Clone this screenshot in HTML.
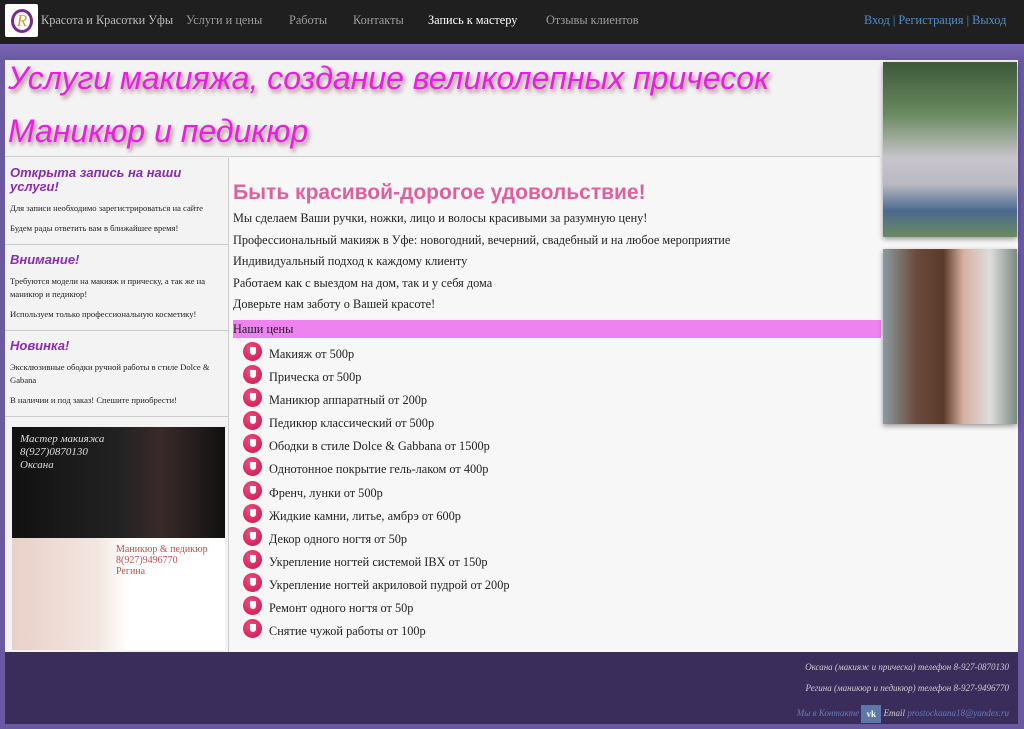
<!DOCTYPE html>
<html><head><meta charset="utf-8"><style>
*{margin:0;padding:0;box-sizing:border-box}
body{width:1024px;height:729px;overflow:hidden;background:#6a58a0;font-family:"Liberation Serif",serif;position:relative}
.nav{position:absolute;left:0;top:0;width:1024px;height:44px;background:#1f1f1f}
.logo{position:absolute;left:5px;top:4px;width:33px;height:33px;background:#fff;border-radius:2px}
.logo span{position:absolute;left:6px;top:5px;width:22px;height:24px;border:3px solid #7b2b8c;border-radius:50%;color:#c9a23a;font-size:17px;font-style:italic;line-height:18px;text-align:center}
.nav a{position:absolute;top:13px;font-size:12.3px;color:#9d9d9d;text-decoration:none;white-space:nowrap}
.bgstrip{position:absolute;left:0;top:44px;width:1024px;height:16px;background:linear-gradient(#7a68b5,#6a58a0)}
.main{position:absolute;left:5px;top:60px;width:1013px;height:592px;background:#f7f7f7}
.head{position:absolute;left:0;top:0;width:875px;height:97px;background:#f3f3f3;border-bottom:1px solid #ccc}
.head h1{position:absolute;left:3px;font-family:"Liberation Sans",sans-serif;font-style:italic;font-weight:normal;font-size:32px;color:#e81fe0;text-shadow:2px 3px 4px #a78;white-space:nowrap}
.side{position:absolute;left:0;top:98px;width:224px;height:494px;background:#f3f3f3;border-right:1px solid #ccc}
.blk{border-bottom:1px solid #ccc;padding:8px 5px 2px 5px}
.blk h3{font-family:"Liberation Sans",sans-serif;font-style:italic;font-size:13px;color:#8a2bb0;line-height:14px;margin-bottom:8px}
.blk p{font-size:8.6px;color:#222;line-height:13px;margin-bottom:7px}
.content{position:absolute;left:228px;top:121px;width:648px}
.content h2{font-family:"Liberation Sans",sans-serif;font-size:21px;color:#e0609e;font-weight:bold;margin-bottom:3px}
.content p{font-size:12.3px;color:#222;line-height:21.6px}
.prices{background:#ee82ee;font-size:12.3px;color:#222;height:18px;line-height:18px;margin-top:4px;width:648px;margin-bottom:4px}
ul{list-style:none}
li{position:relative;height:23.1px;padding-left:36px;font-size:12.3px;color:#222;line-height:24px}
li::before{content:"";position:absolute;left:10px;top:0px;width:19px;height:19px;border-radius:50%;background:radial-gradient(circle at 40% 35%,#f05080,#c8104a)}
li::after{content:"";position:absolute;left:17px;top:5px;width:6px;height:8px;background:#fff;border-radius:0 0 3px 3px}
.ph{position:absolute;left:878px;width:134px;height:175px;box-shadow:0 2px 5px rgba(0,0,0,.4)}
.foot{position:absolute;left:5px;top:652px;width:1013px;height:72px;background:#3a2d5c}
.foot p{position:absolute;right:9px;font-size:9px;font-style:italic;color:#ccc;white-space:nowrap}
</style></head><body>
<div class="nav">
<div class="logo"><span>R</span></div>
<a style="left:41px;color:#bbb">Красота и Красотки Уфы</a>
<a style="left:186px">Услуги и цены</a>
<a style="left:289px">Работы</a>
<a style="left:353px">Контакты</a>
<a style="left:428px;color:#fff">Запись к мастеру</a>
<a style="left:546px">Отзывы клиентов</a>
<a style="left:864px;color:#4a90d0">Вход | Регистрация | Выход</a>
</div>
<div class="bgstrip"></div>
<div class="main">
<div class="head">
<h1 style="top:0px">Услуги макияжа, создание великолепных причесок</h1>
<h1 style="top:53px">Маникюр и педикюр</h1>
</div>
<div class="side">
<div class="blk"><h3>Открыта запись на наши услуги!</h3><p>Для записи необходимо зарегистрироваться на сайте</p><p>Будем рады ответить вам в ближайшее время!</p></div>
<div class="blk"><h3>Внимание!</h3><p>Требуются модели на макияж и прическу, а так же на маникюр и педикюр!</p><p>Используем только профессиональную косметику!</p></div>
<div class="blk"><h3>Новинка!</h3><p>Эксклюзивные ободки ручной работы в стиле Dolce &amp; Gabana</p><p>В наличии и под заказ! Спешите приобрести!</p></div>
<div style="position:absolute;left:7px;top:269px;width:213px;height:111px;background:linear-gradient(90deg,#111 0%,#222 50%,#3a2a2a 70%,#111 100%)"><span style="position:absolute;left:8px;top:6px;color:#ddd;font-style:italic;font-size:11px;line-height:13px">Мастер макияжа<br>8(927)0870130<br>Оксана</span></div>
<div style="position:absolute;left:7px;top:380px;width:213px;height:112px;background:linear-gradient(90deg,#e8d0c8 0%,#f3e6e0 40%,#fff 55%)"><span style="position:absolute;left:104px;top:6px;color:#c05050;font-size:10px;line-height:11px">Маникюр &amp; педикюр<br>8(927)9496770<br>Регина</span></div>
</div>
<div class="content">
<h2>Быть красивой-дорогое удовольствие!</h2>
<p>Мы сделаем Ваши ручки, ножки, лицо и волосы красивыми за разумную цену!</p>
<p>Профессиональный макияж в Уфе: новогодний, вечерний, свадебный и на любое мероприятие</p>
<p>Индивидуальный подход к каждому клиенту</p>
<p>Работаем как с выездом на дом, так и у себя дома</p>
<p>Доверьте нам заботу о Вашей красоте!</p>
<div class="prices">Наши цены</div>
<ul>
<li>Макияж от 500р</li><li>Прическа от 500р</li><li>Маникюр аппаратный от 200р</li><li>Педикюр классический от 500р</li><li>Ободки в стиле Dolce &amp; Gabbana от 1500р</li><li>Однотонное покрытие гель-лаком от 400р</li><li>Френч, лунки от 500р</li><li>Жидкие камни, литье, амбрэ от 600р</li><li>Декор одного ногтя от 50р</li><li>Укрепление ногтей системой IBX от 150р</li><li>Укрепление ногтей акриловой пудрой от 200р</li><li>Ремонт одного ногтя от 50р</li><li>Снятие чужой работы от 100р</li>
</ul>
</div>
<div class="ph" style="top:2px;background:linear-gradient(180deg,#3c5a3a 0%,#6a8a60 30%,#c9c5cc 55%,#b8b8c0 70%,#4a6a90 85%,#6a8a60 100%)"></div>
<div class="ph" style="top:189px;background:linear-gradient(90deg,#8a9aa0 0%,#6a4a3a 25%,#5a3a2a 45%,#d8b0a0 60%,#ddd 80%,#7a8a80 100%)"></div>
</div>
<div class="foot">
<p style="top:10px">Оксана (макияж и прическа) телефон 8-927-0870130</p>
<p style="top:31px">Регина (маникюр и педикюр) телефон 8-927-9496770</p>
<p style="top:53px"><span style="color:#6a7ab8">Мы в Контакте</span> <span style="display:inline-block;width:20px;height:18px;background:#5a78a8;color:#fff;font-style:normal;text-align:center;vertical-align:middle;font-weight:bold;line-height:18px">vk</span> Email <span style="color:#6a7ab8">prostockaana18@yandex.ru</span></p>
</div>
</body></html>
